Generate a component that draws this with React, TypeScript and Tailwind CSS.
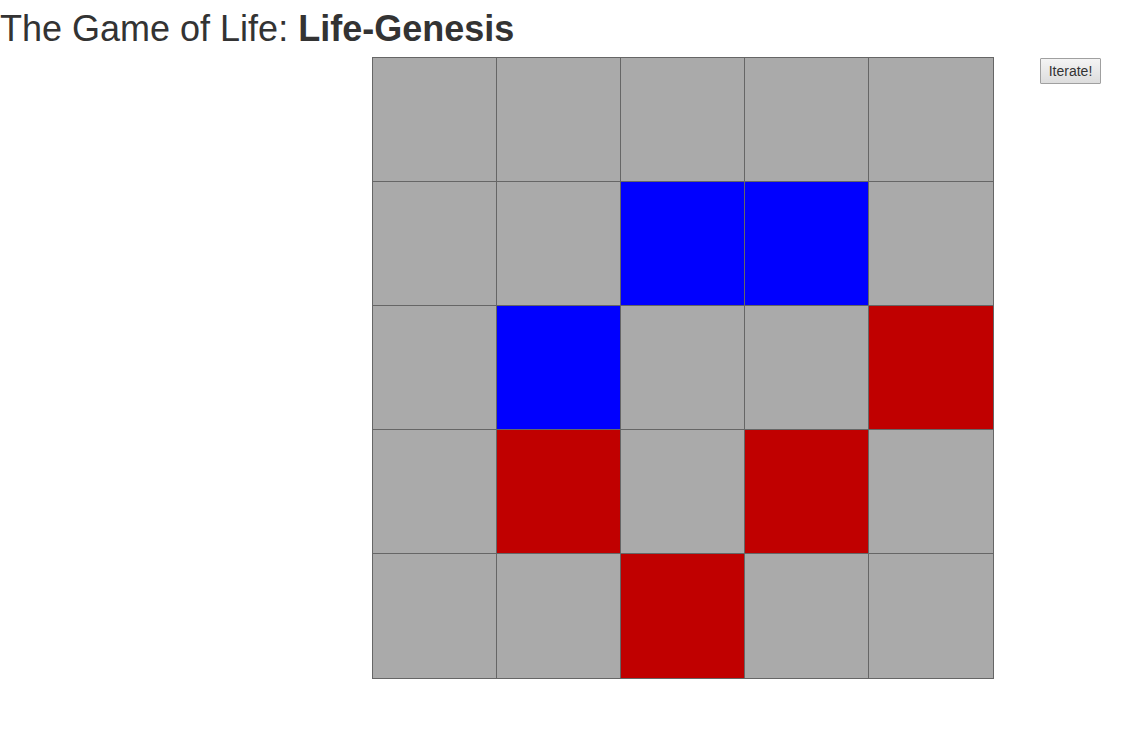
import { useState } from 'react';

type Cell = 'dead' | 'blue' | 'red';

const SIZE = 5;

const COLORS: Record<Cell, string> = {
  dead: 'bg-[#aaaaaa]',
  blue: 'bg-[#0000ff]',
  red: 'bg-[#c00000]',
};

const NEXT: Record<Cell, Cell> = { dead: 'blue', blue: 'red', red: 'dead' };

const START: Cell[] = [
  'dead', 'dead', 'dead', 'dead', 'dead',
  'dead', 'dead', 'blue', 'blue', 'dead',
  'dead', 'blue', 'dead', 'dead', 'red',
  'dead', 'red', 'dead', 'red', 'dead',
  'dead', 'dead', 'red', 'dead', 'dead',
];

function neighbours(cells: Cell[], index: number): Cell[] {
  const row = Math.floor(index / SIZE);
  const col = index % SIZE;
  return cells.filter((cell, i) => {
    const dr = Math.abs(Math.floor(i / SIZE) - row);
    const dc = Math.abs((i % SIZE) - col);
    return i !== index && dr <= 1 && dc <= 1 && cell !== 'dead';
  });
}

// A live cell survives with two or three neighbours; a dead one is born with
// exactly three and takes the colour of the majority.
function iterate(cells: Cell[]): Cell[] {
  return cells.map((cell, i) => {
    const around = neighbours(cells, i);
    if (cell !== 'dead') {
      return around.length === 2 || around.length === 3 ? cell : 'dead';
    }
    if (around.length !== 3) return 'dead';
    return around.filter((c) => c === 'blue').length >= 2 ? 'blue' : 'red';
  });
}

export default function App() {
  const [cells, setCells] = useState<Cell[]>(START);

  const toggle = (index: number) =>
    setCells((prev) => prev.map((cell, i) => (i === index ? NEXT[cell] : cell)));

  return (
    <div className="min-h-screen bg-white font-['Liberation_Sans',Arial,sans-serif] text-[#333333]">
      <h1 className="pt-2 pb-2 text-[36px] leading-[41px]">
        The Game of Life: <strong className="font-bold">Life-Genesis</strong>
      </h1>
      <main className="flex items-start justify-end gap-[46px] pr-[41px]">
        <div className="grid aspect-square w-full max-w-[622px] grid-cols-[repeat(4,123fr)_124fr] grid-rows-[repeat(4,123fr)_124fr] gap-px border border-[#666666] bg-[#666666]">
          {cells.map((cell, i) => (
            <button
              key={i}
              type="button"
              aria-label={`Row ${Math.floor(i / SIZE) + 1}, column ${(i % SIZE) + 1}`}
              onClick={() => toggle(i)}
              className={COLORS[cell]}
            />
          ))}
        </div>
        <button
          type="button"
          onClick={() => setCells(iterate)}
          className="mt-px h-[26px] w-[61px] shrink-0 rounded-[1px] border border-[#a0a0a0] bg-linear-to-b from-[#f4f4f4] to-[#dddddd] text-[14px] leading-5"
        >
          Iterate!
        </button>
      </main>
    </div>
  );
}
